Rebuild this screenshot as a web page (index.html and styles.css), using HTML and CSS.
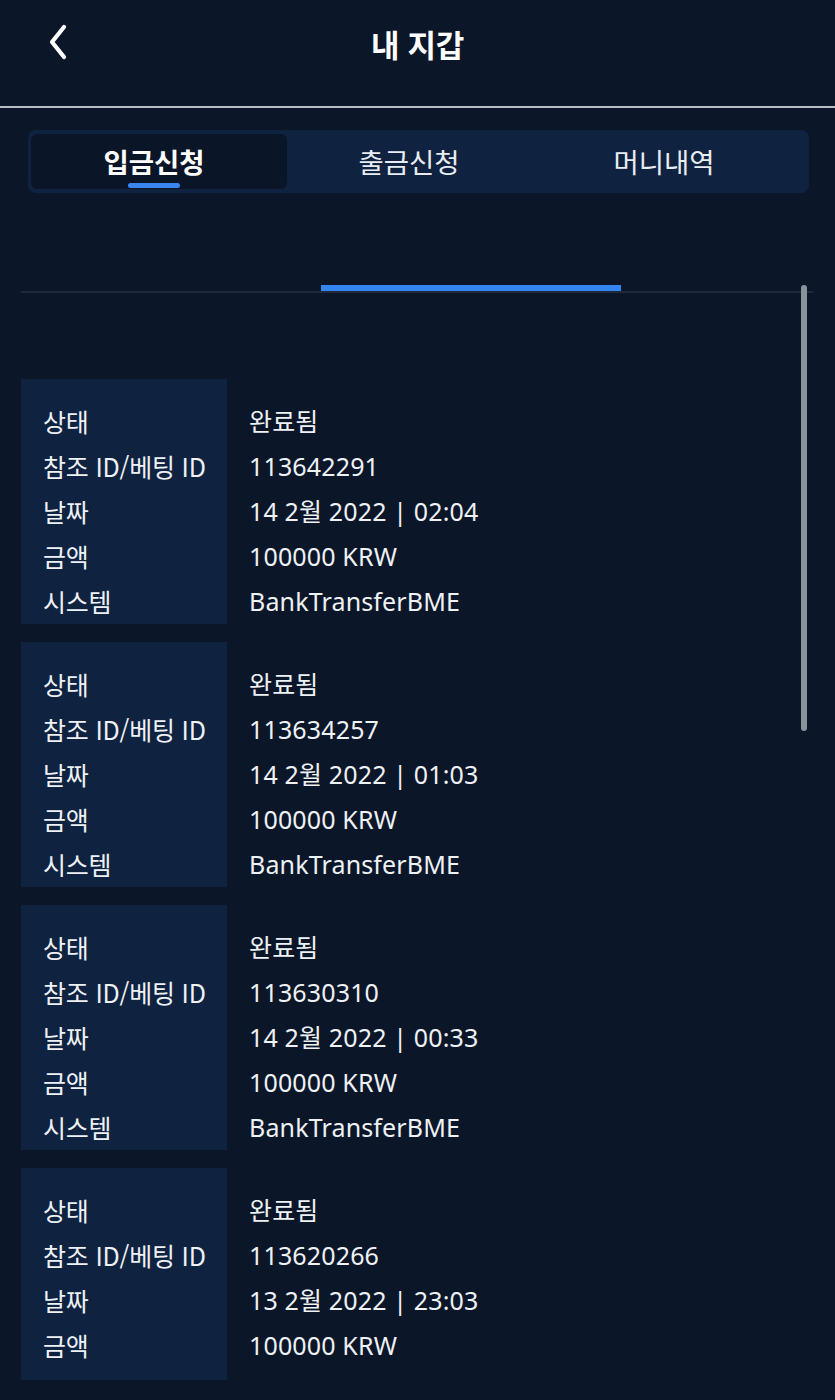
FILE: index.html
```html
<!DOCTYPE html>
<html lang="ko">
<head>
<meta charset="utf-8">
<title>내 지갑</title>
<link rel="stylesheet" href="styles.css">
</head>
<body>
<div class="app">
  <header class="topbar">
    <a class="back" aria-label="뒤로">
      <svg width="24" height="38" viewBox="0 0 24 38"><polyline points="18,4 6,19 18,34" fill="none" stroke="#ffffff" stroke-width="4.2" stroke-linecap="round" stroke-linejoin="round"/></svg>
    </a>
    <h1 class="title">내 지갑</h1>
  </header>

  <nav class="tabs">
    <div class="tab active">입금신청<span class="tab-ind"></span></div>
    <div class="tab">출금신청</div>
    <div class="tab">머니내역</div>
  </nav>

  <div class="progress"><span class="progress-bar"></span></div>

  <div class="list-wrap">
    <div class="list">
      <div class="card">
        <div class="labels"><div>상태</div><div>참조 ID/베팅 ID</div><div>날짜</div><div>금액</div><div>시스템</div></div>
        <div class="values"><div>완료됨</div><div>113642291</div><div>14 2월 2022 | 02:04</div><div>100000 KRW</div><div>BankTransferBME</div></div>
      </div>
      <div class="card">
        <div class="labels"><div>상태</div><div>참조 ID/베팅 ID</div><div>날짜</div><div>금액</div><div>시스템</div></div>
        <div class="values"><div>완료됨</div><div>113634257</div><div>14 2월 2022 | 01:03</div><div>100000 KRW</div><div>BankTransferBME</div></div>
      </div>
      <div class="card">
        <div class="labels"><div>상태</div><div>참조 ID/베팅 ID</div><div>날짜</div><div>금액</div><div>시스템</div></div>
        <div class="values"><div>완료됨</div><div>113630310</div><div>14 2월 2022 | 00:33</div><div>100000 KRW</div><div>BankTransferBME</div></div>
      </div>
      <div class="card card-last">
        <div class="labels"><div>상태</div><div>참조 ID/베팅 ID</div><div>날짜</div><div>금액</div></div>
        <div class="values"><div>완료됨</div><div>113620266</div><div>13 2월 2022 | 23:03</div><div>100000 KRW</div></div>
      </div>
    </div>
    <div class="scrollbar"></div>
  </div>
</div>
</body>
</html>
```
FILE: styles.css
```css
* { box-sizing: border-box; }
html, body {
  margin: 0;
  padding: 0;
  background: #0b1729;
  color: #eef1f5;
  font-family: "Noto Sans", "Noto Sans CJK KR", sans-serif;
}
.app {
  width: 835px;
  height: 1400px;
  overflow: hidden;
  position: relative;
}
.topbar {
  height: 108px;
  border-bottom: 2px solid #b9bec6;
  display: flex;
  align-items: center;
  justify-content: center;
  position: relative;
  padding-bottom: 20px;
}
.back {
  position: absolute;
  left: 46px;
  top: 23px;
  display: block;
  width: 24px;
  height: 38px;
}
.back svg { display: block; }
.title {
  margin: 0;
  font-family: "Noto Sans CJK KR", sans-serif;
  font-size: 31px;
  font-weight: 700;
  color: #ffffff;
  letter-spacing: -0.3px;
}
.tabs {
  margin: 22px 26px 0 28px;
  height: 63px;
  background: #0f2341;
  border-radius: 8px;
  padding: 4px 3px;
  display: grid;
  grid-template-columns: 256px 254px 256px;
}
.tab {
  position: relative;
  display: flex;
  align-items: center;
  justify-content: center;
  font-family: "Noto Sans CJK KR", sans-serif;
  font-size: 27.5px;
  color: #e9edf2;
  padding: 0 10px 2px 0;
  letter-spacing: 0;
}
.tab.active {
  background: #0a1628;
  border-radius: 6px;
  font-weight: 700;
  color: #ffffff;
}
.tab-ind {
  position: absolute;
  left: 97px;
  bottom: 1px;
  width: 52px;
  height: 5px;
  border-radius: 3px;
  background: #3a86f0;
}
.progress {
  margin: 92px 22px 0 21px;
  border-bottom: 2px solid #1f2b3d;
  height: 8px;
  display: flex;
}
.progress-bar {
  margin-left: 300px;
  width: 300px;
  height: 6px;
  background: #3385ef;
}
.list-wrap {
  position: relative;
  margin-top: 86px;
}
.list {
  display: flex;
  flex-direction: column;
  gap: 18px;
  padding-left: 21px;
}
.card {
  display: grid;
  grid-template-columns: 206px 1fr;
  font-size: 25px;
  line-height: 45px;
}
.labels {
  background: #0f2341;
  padding: 20px 0 0 22px;
  font-family: "Noto Sans CJK KR", sans-serif;
  letter-spacing: -0.2px;
  color: #eef1f5;
}
.card-last .labels { padding-bottom: 12px; }
.values {
  padding: 20px 0 0 22px;
  color: #eef1f5;
  letter-spacing: 0.15px;
}
.labels div, .values div { white-space: nowrap; height: 45px; }
.scrollbar {
  position: absolute;
  left: 801px;
  top: -94px;
  width: 6px;
  height: 446px;
  border-radius: 3px;
  background: #8a929c;
}
```
